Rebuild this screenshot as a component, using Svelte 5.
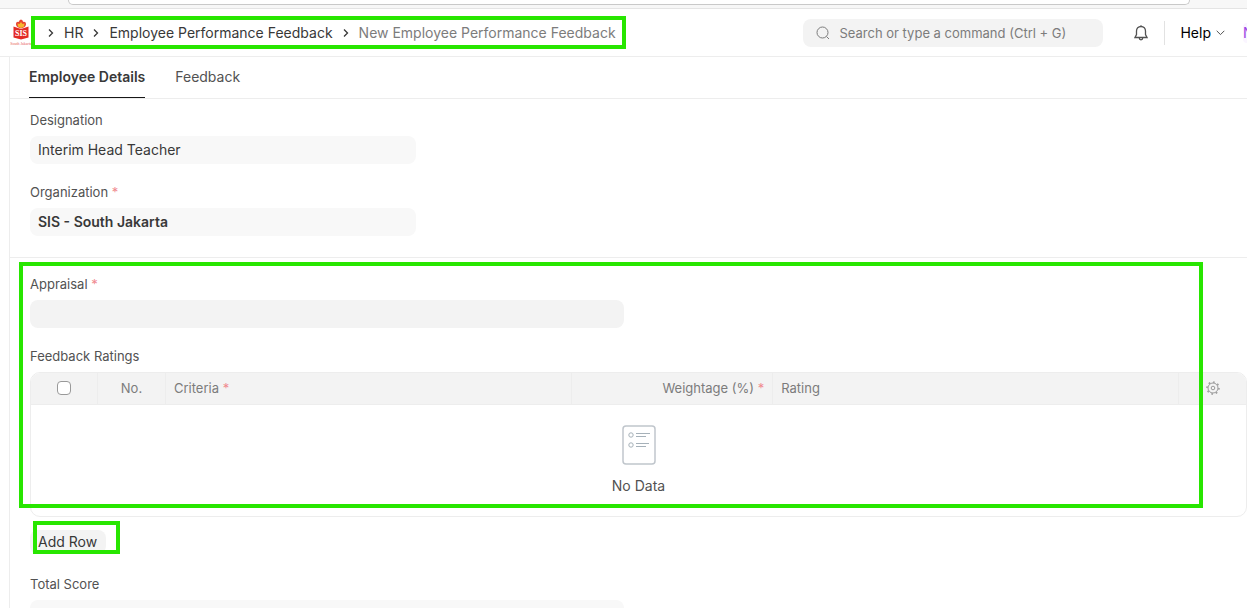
<script lang="ts">
  const crumbs = ['HR', 'Employee Performance Feedback'];
  const tabs = ['Employee Details', 'Feedback'];
  let active = $state('Employee Details');
  let designation = $state('Interim Head Teacher');
  let organization = $state('SIS - South Jakarta');
  let appraisal = $state('');
  let score = $state('');
</script>

{#snippet chevron()}
  <svg class="chevron" width="6" height="10" viewBox="0 0 6 10" aria-hidden="true"><path d="M1 1.500 4.500 5 1 8.500" /></svg>
{/snippet}

<div class="chrome"><div class="address"></div></div>

<header class="navbar">
  <a class="logo" href="#home" aria-label="SIS South Jakarta">
    <svg width="24" height="28" viewBox="0 0 24 28">
      <path d="M12 .5c1.500.5 2 1.500 2 2.500 1.500-.5 3 0 3 2 0 3-2.500 3.500-5 4.500C9.500 8.500 7 8 7 5c0-2 1.500-2.500 3-2 0-1 .5-2 2-2.500z" fill="#e8442f" />
      <path d="M8.500 4.500 10.500 5 12 3l1.500 2 2-.5-.5 3-3 1.500L9 7.500z" fill="#f5b82e" />
      <path d="M4.500 7.500 12 10l7.500-2.500v11L12 20.500l-7.500-2z" fill="#e32a25" />
      <text x="12" y="17" text-anchor="middle" class="sis">SIS</text>
      <text x="12" y="26" text-anchor="middle" class="city">South Jakarta</text>
    </svg>
  </a>
  <nav class="crumbs marked" aria-label="Breadcrumb">
    {#each crumbs as crumb}
      {@render chevron()}
      <a href="#{crumb}">{crumb}</a>
    {/each}
    {@render chevron()}
    <span>New Employee Performance Feedback</span>
  </nav>
  <div class="tools">
    <label class="search">
      <svg width="14" height="14" viewBox="0 0 14 14" aria-hidden="true"><circle cx="6.500" cy="6.500" r="5.500" /><path d="m10.500 10.500 2.500 2.500" /></svg>
      <input type="text" placeholder="Search or type a command (Ctrl + G)" aria-label="Search" />
    </label>
    <button class="bell" aria-label="Notifications">
      <svg width="14" height="16" viewBox="0 0 14 16"><path d="M7 1.500c-2.800 0-4.500 2-4.500 4.500v3.500L1 12.500h12L11.500 9.500V6c0-2.500-1.700-4.500-4.500-4.500zM7 .3v1.200" /><path d="M5.300 13c0 2.400 3.400 2.400 3.400 0" /></svg>
    </button>
    <button class="help">Help <svg width="9" height="6" viewBox="0 0 9 6" aria-hidden="true"><path d="m.7.8 3.800 3.800L8.300.8" /></svg></button>
    <span class="avatar">N</span>
  </div>
</header>

<main>
  <div class="tabs" role="tablist">
    {#each tabs as tab}
      <button role="tab" aria-selected={active === tab} class:active={active === tab} onclick={() => (active = tab)}>{tab}</button>
    {/each}
  </div>

  <section class="details">
    <div class="fields thirds">
      <div class="field">
        <label for="designation">Designation</label>
        <input id="designation" type="text" readonly bind:value={designation} />
      </div>
      <div class="field">
        <label for="organization">Organization <i>*</i></label>
        <input id="organization" class="bold" type="text" readonly bind:value={organization} />
      </div>
    </div>
  </section>

  <section class="ratings">
    <div class="frame" aria-hidden="true"></div>
    <div class="fields halves">
      <div class="field">
        <label for="appraisal">Appraisal <i>*</i></label>
        <input id="appraisal" class="editable" type="text" bind:value={appraisal} />
      </div>
    </div>
    <div class="field">
      <span class="label" id="ratings-label">Feedback Ratings</span>
      <div class="grid">
        <table aria-labelledby="ratings-label">
          <colgroup><col class="check" /><col class="narrow" /><col class="wide" /><col /><col class="wide" /><col class="check" /></colgroup>
          <thead>
            <tr>
              <th class="center"><input type="checkbox" aria-label="Select all rows" /></th>
              <th class="center">No.</th>
              <th>Criteria <i>*</i></th>
              <th class="right">Weightage (%) <i>*</i></th>
              <th>Rating</th>
              <th class="center">
                <button class="gear" aria-label="Configure columns">
                  <svg width="14" height="14" viewBox="0 0 14 14"><circle cx="7" cy="7" r="5" /><circle cx="7" cy="7" r="1.800" /><circle class="teeth" cx="7" cy="7" r="6" pathLength="32" /></svg>
                </button>
              </th>
            </tr>
          </thead>
          <tbody>
            <tr>
              <td colspan="6">
                <svg class="sheet" width="34" height="40" viewBox="0 0 34 40" aria-hidden="true">
                  <rect x="1" y="1" width="32" height="38" rx="3" />
                  <circle cx="9" cy="10" r="2.200" /><circle cx="9" cy="20" r="2.200" />
                  <path d="M14 8.500h14M14 11.500h10M14 18.500h13M14 21.500h10" />
                </svg>
                No Data
              </td>
            </tr>
          </tbody>
        </table>
      </div>
    </div>
  </section>

  <div class="actions">
    <span class="marked"><button class="add">Add Row</button></span>
  </div>

  <div class="fields halves total">
    <div class="field">
      <label for="score">Total Score</label>
      <input id="score" type="text" readonly bind:value={score} />
    </div>
  </div>
</main>

<style>
  :global(body) { background: #fff; overflow: hidden; }
  :global(#app) { height: 100vh; overflow: hidden; color: #383838; font: 14px/20px Inter, sans-serif; }
  * { box-sizing: border-box; }
  button, input { font: inherit; color: inherit; border: 0; background: none; padding: 0; margin: 0; }
  a { color: inherit; text-decoration: none; }
  svg { fill: none; stroke: #525252; flex: none; }
  i { color: #f08a8f; font-style: normal; }

  .chrome { height: 9px; padding: 0 57px 0 68px; background: #f7f7f7; border-bottom: 1px solid #e4e4e4; }
  .address { height: 5px; background: #fff; border: 1px solid #c9c9c9; border-top: 0; border-radius: 0 0 12px 12px; }

  .navbar { display: flex; align-items: center; height: 48px; padding-left: 9px; border-bottom: 1px solid #ededed; overflow: hidden; }
  .logo { display: flex; width: 22px; overflow: hidden; }
  .logo svg { stroke: none; }
  .sis { fill: #fff; font: bold 8px 'Liberation Serif', serif; }
  .city { fill: #e8605c; font: 4px 'Liberation Serif', serif; }
  .crumbs { display: flex; align-items: center; gap: 10px; height: 33px; padding: 0 10px 0 17px; white-space: nowrap; }
  .crumbs span { color: #7c7c7c; }
  .chevron { stroke: #383838; stroke-width: 1.300; }

  /* bright outline drawn over the content it calls out */
  .marked { position: relative; }
  .marked::after, .frame { content: ''; position: absolute; inset: 0; border: 4px solid #28e600; pointer-events: none; }

  .tools { display: flex; align-items: center; margin-left: auto; }
  .search { display: flex; align-items: center; gap: 9px; width: 300px; height: 28px; padding: 0 13px; background: #f3f3f3; border-radius: 8px; }
  .search svg { stroke: #7c7c7c; }
  .search input { flex: 1; min-width: 0; outline: 0; }
  .search input::placeholder { color: #7c7c7c; opacity: 1; }
  .bell { display: flex; margin: 0 16px 0 31px; }
  .bell svg { stroke-width: 1.300; }
  .help { display: flex; align-items: center; gap: 5px; height: 24px; padding: 0 18px 0 15px; border-left: 1px solid #e2e2e2; color: #000; }
  .avatar { width: 4px; overflow: hidden; background: #faf5ff; border-radius: 8px 0 0 8px; color: #9c45e3; }

  main { margin-left: 9px; border-left: 1px solid #ededed; }
  .tabs { display: flex; gap: 30px; height: 42px; padding-left: 19px; border-bottom: 1px solid #ededed; }
  .tabs button { color: #525252; border-bottom: 1px solid transparent; }
  .tabs .active { color: #383838; font-weight: 600; border-color: #171717; }

  .details { padding: 11px 0 21px 20px; border-bottom: 1px solid #ededed; }
  .ratings { position: relative; padding: 16px 0 0 20px; }
  .frame { inset: 4px 44px 9px 9px; }
  .fields { display: grid; }
  .thirds { width: calc((100% - 60px) / 3); }
  .halves { width: calc((100% - 30px) / 2); }
  .field { display: flex; flex-direction: column; gap: 6px; margin-bottom: 18px; }
  .details .field:last-child, .ratings > .field { margin-bottom: 0; }
  label, .label { font-size: 13px; line-height: 20px; color: #525252; }
  .field > input { height: 28px; padding: 0 8px 2px; background: #f8f8f8; border-radius: 8px; outline: 0; }
  .field > .editable { background: #f3f3f3; }
  .field > .bold { font-weight: 600; }

  .grid { border: 1px solid #ededed; border-radius: 10px; overflow: hidden; }
  table { width: 100%; table-layout: fixed; border-collapse: separate; border-spacing: 0; }
  .check { width: 67px; }
  .narrow { width: 68px; }
  .wide { width: 33.400%; }
  th { height: 32px; padding: 0 8px 2px; background: #f3f3f3; color: #7c7c7c; font-size: 13px; font-weight: 400; text-align: left; border-right: 1px solid #ededed; border-bottom: 1px solid #ededed; }
  th:last-child { border-right: 0; }
  .center { text-align: center; }
  .right { text-align: right; }
  th input { appearance: none; display: block; width: 14px; height: 14px; margin: 0 auto; border: 1px solid #999; border-radius: 4px; background: #fff; }
  .gear { display: block; margin: 0 auto; height: 14px; }
  .gear svg { display: block; stroke: #999; }
  .teeth { stroke-width: 1.500; stroke-dasharray: 1.500 2.500; }
  td { height: 111px; padding: 0; text-align: center; color: #525252; }
  .sheet { display: block; margin: 0 auto 11px; stroke: #a6b1b9; }
  .sheet rect { stroke: #c0c6cc; stroke-width: 1.500; }

  .actions { padding: 4px 0 0 20px; }
  .actions .marked { display: block; width: 90px; height: 33px; padding-top: 9px; }
  .actions .marked::after { left: 3px; }
  .add { height: 24px; padding: 0 9px 0 8px; background: #f3f3f3; border-radius: 8px; }
  .total { padding: 20px 0 0 20px; width: calc((100% + 10px - 20px) / 2); }
</style>
